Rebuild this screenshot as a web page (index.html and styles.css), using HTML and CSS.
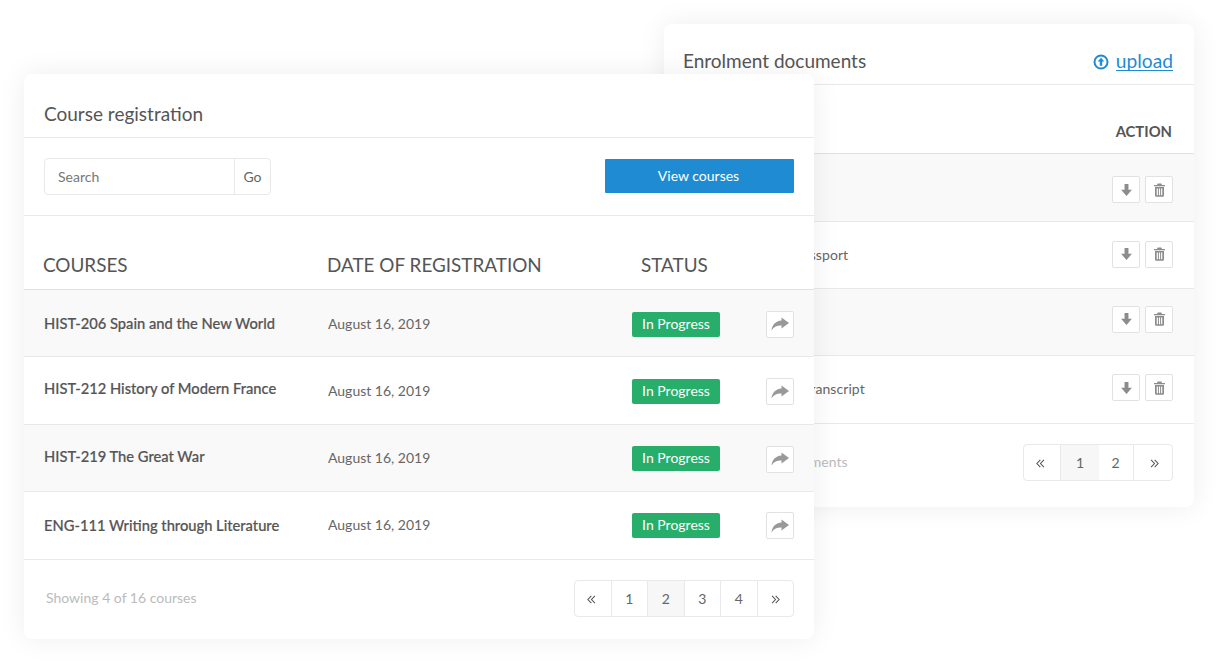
FILE: index.html
```html
<!DOCTYPE html>
<html lang="en">
<head>
<meta charset="utf-8">
<title>Course registration</title>
<link rel="stylesheet" href="styles.css">
</head>
<body>
<svg class="sprite" width="0" height="0" aria-hidden="true">
  <symbol id="i-down" viewBox="0 0 12 12"><path d="M4.200 .5h3.600v5.300h3.200L6 11.500 1 5.800h3.200z"/></symbol>
  <symbol id="i-trash" viewBox="0 0 12 14"><path d="M4.200 .6h3.600l.7 1.400H11.500v1.200H.5V2h3zM1.500 4h9v8.500a1.200 1.200 0 0 1-1.200 1.200H2.700a1.200 1.200 0 0 1-1.200-1.200zm1.700 1.400v6.800h1.200V5.400zm2.200 0v6.800h1.200V5.400zm2.200 0v6.800h1.200V5.400z" fill-rule="evenodd"/></symbol>
  <symbol id="i-share" viewBox="0 0 18 14"><path d="M10.500 .5 18 6l-7.500 5.500V8.500C6 8.500 3 9.500 .5 13.500 1 8 4.500 3.700 10.500 3.400z"/></symbol>
  <symbol id="i-prev" viewBox="0 0 10 10"><path d="M4.800 1 1 5l3.800 4M8.800 1 5 5l3.800 4" fill="none" stroke="currentColor" stroke-width="1.200"/></symbol>
  <symbol id="i-next" viewBox="0 0 10 10"><path d="M1.200 1 5 5 1.200 9M5.200 1 9 5 5.200 9" fill="none" stroke="currentColor" stroke-width="1.200"/></symbol>
</svg>

<section class="card card-back">
  <header class="card-head card-head-back">
    <h2 class="card-title title-back">Enrolment documents</h2>
    <a class="upload" href="#">
      <svg class="upload-icon" viewBox="0 0 16 16"><circle cx="8" cy="8" r="6.500" fill="none" stroke="currentColor" stroke-width="2"/><path d="M8 3.800 11.300 7.500H9.200v4.200H6.800V7.500H4.700z" fill="currentColor"/></svg>
      <span class="upload-label">upload</span>
    </a>
  </header>
  <div class="doc-head"><span class="doc-head-action">ACTION</span></div>
  <div class="doc-row doc-h68 alt"><span class="doc-name"></span><span class="actions act-1"><button class="tool"><svg class="tool-icon"><use href="#i-down"/></svg></button><button class="tool"><svg class="tool-icon"><use href="#i-trash"/></svg></button></span></div>
  <div class="doc-row doc-h67"><span class="doc-name">Photocopy of the passport</span><span class="actions act-2"><button class="tool"><svg class="tool-icon"><use href="#i-down"/></svg></button><button class="tool"><svg class="tool-icon"><use href="#i-trash"/></svg></button></span></div>
  <div class="doc-row doc-h67 alt"><span class="doc-name"></span><span class="actions act-3"><button class="tool"><svg class="tool-icon"><use href="#i-down"/></svg></button><button class="tool"><svg class="tool-icon"><use href="#i-trash"/></svg></button></span></div>
  <div class="doc-row doc-h68"><span class="doc-name">Previous university transcript</span><span class="actions act-4"><button class="tool"><svg class="tool-icon"><use href="#i-down"/></svg></button><button class="tool"><svg class="tool-icon"><use href="#i-trash"/></svg></button></span></div>
  <footer class="card-foot card-foot-back">
    <span class="foot-note">Showing 4 of 8 documents</span>
    <nav class="pager">
      <a class="page w-37"><svg class="chev chev-prev"><use href="#i-prev"/></svg></a><a class="page w-39 active">1</a><a class="page w-34 no-line">2</a><a class="page w-39"><svg class="chev chev-next"><use href="#i-next"/></svg></a>
    </nav>
  </footer>
</section>

<section class="card card-front">
  <header class="card-head card-head-front">
    <h2 class="card-title">Course registration</h2>
  </header>
  <div class="toolbar">
    <div class="search"><span class="search-input">Search</span><span class="search-go">Go</span></div>
    <button class="primary">View courses</button>
  </div>
  <div class="course-grid course-head">
    <span class="th th-course">COURSES</span>
    <span class="th th-date">DATE OF REGISTRATION</span>
    <span class="th th-status">STATUS</span>
  </div>
  <div class="course-grid course-row row-a alt"><span class="course-name">HIST-206 Spain and the New World</span><span class="course-date">August 16, 2019</span><span class="badge">In Progress</span><button class="tool share nudge"><svg class="share-icon"><use href="#i-share"/></svg></button></div>
  <div class="course-grid course-row row-b"><span class="course-name raise">HIST-212 History of Modern France</span><span class="course-date">August 16, 2019</span><span class="badge">In Progress</span><button class="tool share nudge"><svg class="share-icon"><use href="#i-share"/></svg></button></div>
  <div class="course-grid course-row row-a alt"><span class="course-name raise-less">HIST-219 The Great War</span><span class="course-date lift">August 16, 2019</span><span class="badge badge-lift">In Progress</span><button class="tool share nudge"><svg class="share-icon"><use href="#i-share"/></svg></button></div>
  <div class="course-grid course-row row-b"><span class="course-name lift">ENG-111 Writing through Literature</span><span class="course-date lift">August 16, 2019</span><span class="badge badge-lift">In Progress</span><button class="tool share"><svg class="share-icon"><use href="#i-share"/></svg></button></div>
  <footer class="card-foot card-foot-front">
    <span class="foot-note foot-note-front">Showing 4 of 16 courses</span>
    <nav class="pager pager-front">
      <a class="page"><svg class="chev chev-prev"><use href="#i-prev"/></svg></a><a class="page">1</a><a class="page active">2</a><a class="page">3</a><a class="page">4</a><a class="page"><svg class="chev"><use href="#i-next"/></svg></a>
    </nav>
  </footer>
</section>
</body>
</html>
```
FILE: styles.css
```css
* { box-sizing: border-box; }
html, body { margin: 0; padding: 0; }
body {
  position: relative;
  width: 1218px;
  height: 663px;
  overflow: hidden;
  background: #fff;
  font-family: Lato, "Noto Sans", sans-serif;
  color: #555;
}
.sprite { position: absolute; }

.card {
  position: absolute;
  display: flex;
  flex-direction: column;
  background: #fff;
  border-radius: 8px;
  box-shadow: 0 0 28px rgba(0, 0, 0, .07);
}
.card-back { left: 664px; top: 24px; width: 530px; height: 483px; }
.card-front { left: 24px; top: 74px; width: 790px; height: 565px; }

.card-head {
  display: flex;
  align-items: center;
  justify-content: space-between;
  border-bottom: 1px solid #e9e9e9;
}
.card-head-back { height: 61px; padding: 12px 21px 0 20px; }
.card-head-front { height: 64px; padding: 16px 20px 0; }
.card-title { margin: 0; font-size: 19px; font-weight: 400; color: #555; }
.title-back { margin-left: -1px; }

.upload { display: flex; align-items: center; gap: 7px; color: #1f8bd3; text-decoration: none; }
.upload-icon { width: 16px; height: 16px; margin-top: 3px; }
.upload-label { font-size: 19.200px; line-height: 18px; padding-top: 3px; border-bottom: 1px solid #1f8bd3; }

.doc-head {
  display: flex;
  justify-content: flex-end;
  align-items: flex-end;
  height: 69px;
  padding: 0 22px 13px 0;
  border-bottom: 1px solid #e2e2e2;
  font-size: 14.800px;
  font-weight: 700;
  color: #555;
}
.doc-row {
  display: flex;
  align-items: center;
  justify-content: space-between;
  padding: 0 21px 0 20px;
  border-bottom: 1px solid #e9e9e9;
  font-size: 14px;
}
.doc-h68 { height: 68px; }
.doc-h67 { height: 67px; }
.alt { background: #f9f9f9; }
.doc-name { color: #666; margin-bottom: 2px; letter-spacing: .08px; }
.actions { display: flex; gap: 5px; }
.act-1 { margin-top: 4px; }
.act-2 { margin-bottom: 2px; }
.act-3 { margin-bottom: 6px; }
.act-4 { margin-bottom: 4px; }

.tool {
  display: flex;
  align-items: center;
  justify-content: center;
  width: 28px;
  height: 27px;
  padding: 0;
  background: #fff;
  border: 1px solid #e2e2e2;
  border-radius: 2px;
  color: #8c8c8c;
}
.nudge { margin-top: 2px; }
.tool-icon { width: 13px; height: 14px; fill: currentColor; }
.share-icon { width: 18px; height: 14px; fill: #999; }

.card-foot { display: flex; align-items: center; justify-content: space-between; flex: 1; padding: 0 21px 0 20px; }
.card-foot-back { padding-bottom: 6px; }
.card-foot-front { padding: 0 20px 3px 22px; }
.foot-note { font-size: 14px; color: #bbb; margin-bottom: 2px; }

.pager {
  display: flex;
  height: 37px;
  background: #fff;
  border: 1px solid #e9e9e9;
  border-radius: 4px;
}
.pager-front { width: 220px; }
.page {
  display: flex;
  align-items: center;
  justify-content: center;
  flex: 1;
  font-size: 14px;
  color: #666;
  border-left: 1px solid #e9e9e9;
}
.page:first-child { border-left: 0; }
.w-37 { flex: none; width: 36px; }
.w-39 { flex: none; width: 39px; }
.w-34 { flex: none; width: 34px; padding-right: 1px; }
.no-line { border-left: 0; }
.page.active { background: #f7f7f7; }
.chev { width: 9px; height: 9px; margin-top: 2px; color: #555; }
.chev-prev { margin-right: 3px; }
.chev-next { margin-left: 2px; }

.toolbar {
  display: flex;
  align-items: center;
  justify-content: space-between;
  height: 78px;
  padding: 0 20px;
  border-bottom: 1px solid #e9e9e9;
}
.search {
  display: flex;
  width: 227px;
  height: 37px;
  border: 1px solid #e9e9e9;
  border-radius: 4px;
  font-size: 14px;
  line-height: 35px;
}
.search-input { flex: 1; padding-left: 13px; color: #777; border-right: 1px solid #e9e9e9; }
.search-go { width: 35px; text-align: center; color: #666; }
.primary {
  width: 189px;
  height: 34px;
  margin-bottom: 2px;
  padding: 0 2px 0 0;
  background: #1f8bd3;
  border: 0;
  border-radius: 1px;
  color: #fff;
  font: 400 14px Lato, sans-serif;
}

.course-grid {
  display: grid;
  grid-template-columns: 284px 304px 134px 28px;
  align-items: center;
  padding: 0 20px;
}
.course-head {
  height: 74px;
  align-items: end;
  padding-bottom: 12px;
  border-bottom: 1px solid #e2e2e2;
}
.th { font-size: 18.900px; line-height: 24px; color: #555; }
.th-course { margin-left: -1px; }
.th-status { grid-column: 3; margin-left: 9px; justify-self: start; }
.th-date { grid-column: 2; margin-left: -1px; }
.course-row { border-bottom: 1px solid #e9e9e9; }
.row-a { height: 67px; }
.row-b { height: 68px; }
.course-name { font-size: 14.700px; font-weight: 500; color: #555; -webkit-text-stroke: .2px #555; }
.raise { margin-bottom: 6px; }
.raise-less { margin-bottom: 4px; }
.lift { margin-bottom: 2px; }
.course-date { font-size: 14px; color: #666; }
.badge {
  justify-self: start;
  width: 88px;
  height: 25px;
  margin-top: 2px;
  background: #27ae6b;
  border-radius: 2px;
  color: #fff;
  font-size: 14px;
  line-height: 23px;
  text-align: center;
}
.badge-lift { margin-top: 0; }
```
